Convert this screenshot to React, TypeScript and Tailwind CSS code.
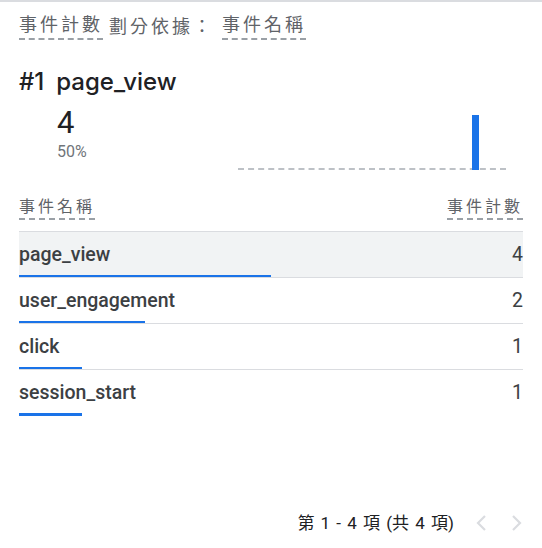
import { ReactElement } from "react";

const rows = [
  { name: "page_view", count: 4 },
  { name: "user_engagement", count: 2 },
  { name: "click", count: 1 },
  { name: "session_start", count: 1 },
];

const total = 8;

function Dashed({ children, className = "" }: { children: string; className?: string }) {
  return (
    <span className={"border-b-2 border-dashed border-[#9aa0a6] pb-[1px] " + className}>{children}</span>
  );
}

export default function App(): ReactElement {
  return (
    <div className="w-[542px] h-[548px] bg-white flex flex-col font-['Roboto','Noto_Sans_CJK_TC',sans-serif] text-[#3c4043] border-t-2 border-[#dadce0]">
      <div className="px-[19px] pt-[8px] flex items-center text-[18px] tracking-[3px] text-[#5f6368] font-['Noto_Sans_CJK_TC',sans-serif]">
        <Dashed>事件計數</Dashed>
        <span className="ml-[6px]">劃分依據：</span>
        <Dashed className="ml-[8px]">事件名稱</Dashed>
      </div>

      <div className="px-[19px] mt-[24px] flex items-baseline text-[24px] font-medium text-[#202124] font-['Inter',sans-serif]">
        <span>#1</span>
        <span className="ml-[12px]">page_view</span>
      </div>

      <div className="pl-[57px] pr-[36px] mt-[4px] flex">
        <div className="flex flex-col">
          <span className="text-[31px] leading-[38px] text-[#202124]">4</span>
          <span className="text-[16px] leading-[20px] text-[#70757a]">50%</span>
        </div>
        <div className="ml-auto w-[268px] h-[58px] mt-[8px] relative border-b-2 border-dashed border-[#bdc1c6]">
          <div className="absolute bottom-[-2px] left-[234px] w-[7px] h-[55px] bg-[#1a73e8]" />
        </div>
      </div>

      <div className="px-[19px] mt-[23px] flex justify-between text-[16px] tracking-[3px] text-[#5f6368] font-['Noto_Sans_CJK_TC',sans-serif]">
        <Dashed>事件名稱</Dashed>
        <Dashed>事件計數</Dashed>
      </div>

      <div className="mx-[19px] mt-[11px]">
        {rows.map((r, i) => (
          <div
            key={r.name}
            className={"relative h-[46px] flex items-center justify-between border-t border-[#dadce0] text-[19.5px] " + (i === 0 ? "bg-[#f1f3f4]" : "")}
          >
            <span className="font-medium">{r.name}</span>
            <span>{r.count}</span>
            <div
              className="absolute left-0 bottom-[-1px] h-[3px] bg-[#1a73e8]"
              style={{ width: `${(r.count / total) * 100}%` }}
            />
          </div>
        ))}
      </div>

      <div className="mt-auto mb-[12px] pr-[14px] flex items-center justify-end text-[17px] [word-spacing:2px] text-[#202124] font-['Roboto','Noto_Sans_CJK_TC',sans-serif]">
        <span>第 1 - 4 項 (共 4 項)</span>
        <svg width="24" height="24" viewBox="0 0 24 24" className="ml-[16px]" fill="none" stroke="#dadce0" strokeWidth="2.2">
          <path d="M15 5l-7 7 7 7" />
        </svg>
        <svg width="24" height="24" viewBox="0 0 24 24" className="ml-[10px]" fill="none" stroke="#dadce0" strokeWidth="2.2">
          <path d="M9 5l7 7-7 7" />
        </svg>
      </div>
    </div>
  );
}
